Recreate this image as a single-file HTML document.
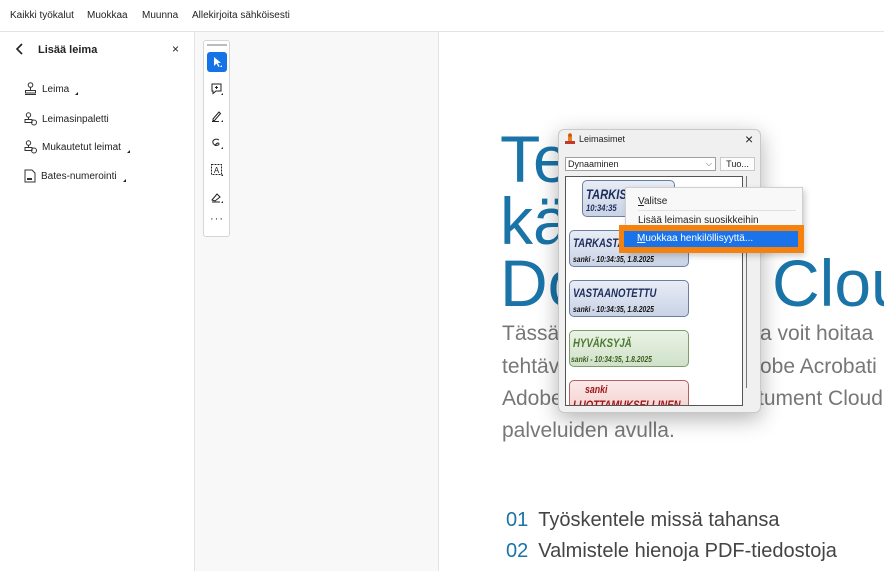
<!DOCTYPE html>
<html><head><meta charset="utf-8">
<style>
*{margin:0;padding:0;box-sizing:border-box}
body{width:884px;height:571px;overflow:hidden;background:#fff;font-family:"Liberation Sans",sans-serif;position:relative;color:#222}
.abs{position:absolute;white-space:nowrap}
#top{left:0;top:0;width:884px;height:32px;border-bottom:1px solid #e3e3e3;font-size:10px}
#top span{position:absolute;top:10px}
#left{left:0;top:32px;width:195px;height:539px;border-right:1px solid #e3e3e3}
#gray{left:195px;top:32px;width:243px;height:539px;background:#f8f8f8}
#page{left:438px;top:32px;width:446px;height:539px;background:#fff;border-left:1px solid #e3e3e3}
.item{position:absolute;left:24px;font-size:10px;display:flex;align-items:center;gap:5px;white-space:nowrap}
.tri{display:inline-block;width:0;height:0;border-left:3px solid transparent;border-bottom:3px solid #222;margin-left:1px;margin-top:8px}
#tb{left:203px;top:40px;width:27px;height:197px;background:#fff;border:1px solid #d6d6d6;border-radius:3px}
.tbi{position:absolute;left:3px;width:20px;height:20px;display:flex;align-items:center;justify-content:center}
.big{font-size:66px;color:#1a74a8;font-family:"Liberation Sans",sans-serif;position:absolute;line-height:1;white-space:nowrap}
.para{font-size:21px;color:#777;position:absolute;font-family:"Liberation Sans",sans-serif;white-space:nowrap}
.li{position:absolute;left:506px;font-size:20px;color:#444;font-family:"Liberation Sans",sans-serif;white-space:nowrap}
.li b{color:#1a74a8;font-weight:normal;margin-right:10px}
#dlg{left:558px;top:129px;width:203px;height:284px;background:#f0f0f0;border:1px solid #c9c9c9;border-radius:6px;box-shadow:0 6px 22px rgba(0,0,0,.3)}
.stamp{position:absolute;border:1px solid #6d7fa0;border-radius:5px;font-family:"Liberation Sans",sans-serif;font-style:italic;font-weight:bold;background:linear-gradient(#e8ecf5,#c9d3e6);color:#1d2e5c;overflow:hidden}
.stamp .t{font-size:12px;position:absolute;left:3px;top:5px;transform:scaleX(.8);transform-origin:left;white-space:nowrap}
.stamp .s{font-size:8px;position:absolute;left:3px;top:24px;color:#111;transform:scaleX(.85);transform-origin:left;white-space:nowrap}
#menu{left:625px;top:187px;width:178px;height:66px;background:#f8f8f8;border:1px solid #cfcfcf;box-shadow:2px 3px 6px rgba(0,0,0,.2);font-size:10px;color:#222}
</style></head><body>
<div id="top" class="abs">
<span style="left:10px">Kaikki työkalut</span><span style="left:87px">Muokkaa</span><span style="left:142px">Muunna</span><span style="left:192px">Allekirjoita sähköisesti</span>
</div>
<div id="left" class="abs">
<svg class="abs" style="left:15px;top:11px" width="10" height="12" viewBox="0 0 10 12"><path d="M7 1L2 6l5 5" stroke="#222" stroke-width="1.6" fill="none"/></svg>
<div class="abs" style="left:38px;top:12px;font-size:11px;font-weight:bold">Lisää leima</div>
<div class="abs" style="left:172px;top:10px;font-size:12px">×</div>
<div class="item" style="top:50px"><svg width="13" height="14" viewBox="0 0 13 14"><circle cx="6.5" cy="3" r="2.3" fill="none" stroke="#333"/><path d="M6.5 5.3v3M1.5 8.5h10v2.5h-10zM1 12.5h11" fill="none" stroke="#333"/></svg>Leima<span class="tri"></span></div>
<div class="item" style="top:80px"><svg width="13" height="14" viewBox="0 0 13 14"><circle cx="4.5" cy="3" r="2.2" fill="none" stroke="#333"/><path d="M4.5 5.2v2M1 7.5h7v3h-7z" fill="none" stroke="#333"/><circle cx="10" cy="10.5" r="2.5" fill="none" stroke="#333"/></svg>Leimasinpaletti</div>
<div class="item" style="top:108px"><svg width="13" height="14" viewBox="0 0 13 14"><circle cx="4.5" cy="3" r="2.2" fill="none" stroke="#333"/><path d="M4.5 5.2v2M1 7.5h7v3h-7z" fill="none" stroke="#333"/><circle cx="10" cy="10.5" r="2.5" fill="none" stroke="#333"/></svg>Mukautetut leimat<span class="tri"></span></div>
<div class="item" style="top:137px"><svg width="12" height="14" viewBox="0 0 12 14"><path d="M1 1h7l3 3v9H1z" fill="none" stroke="#333"/><rect x="3" y="9" width="5" height="2" fill="#333"/></svg>Bates-numerointi<span class="tri"></span></div>
</div>
<div id="gray" class="abs"></div>
<div id="page" class="abs"></div>
<div id="tb" class="abs">
<div class="abs" style="left:3px;top:3px;width:20px;height:2px;background:#bbb"></div>
<div class="tbi" style="top:11px;background:#1473e6;border-radius:3px"><svg width="12" height="14" viewBox="0 0 12 14"><path d="M3 2v9l2.5-2.5 2 3.5 1.2-.7-2-3.4H10z" fill="#fff"/><path d="M11 12l-2 0 2-2z" fill="#fff"/></svg></div>
<div class="tbi" style="top:38px"><svg width="14" height="14" viewBox="0 0 14 14"><path d="M2 2h9v7H6l-3 2.5V9H2z" fill="none" stroke="#222"/><path d="M6.5 4v3M5 5.5h3" stroke="#222"/><path d="M13 13h-2l2-2z" fill="#222"/></svg></div>
<div class="tbi" style="top:65px"><svg width="14" height="14" viewBox="0 0 14 14"><path d="M3 10l6-7 1.5 1.5-6 7H3z" fill="none" stroke="#222"/><path d="M2 12.5h7" stroke="#222"/><path d="M13 13h-2l2-2z" fill="#222"/></svg></div>
<div class="tbi" style="top:92px"><svg width="14" height="14" viewBox="0 0 14 14"><path d="M9 4C6 2 2 4 3 7s6 3 6 1-3-1-4 2" fill="none" stroke="#222"/><path d="M13 13h-2l2-2z" fill="#222"/></svg></div>
<div class="tbi" style="top:119px"><svg width="14" height="14" viewBox="0 0 14 14"><rect x="1.5" y="1.5" width="10" height="10" fill="none" stroke="#222" stroke-dasharray="2 1"/><text x="6.5" y="10" font-size="8" text-anchor="middle" font-family="Liberation Sans" fill="#222">A</text><path d="M13 13h-2l2-2z" fill="#222"/></svg></div>
<div class="tbi" style="top:146px"><svg width="14" height="14" viewBox="0 0 14 14"><path d="M2 10l5-6 3 3-5 4z" fill="none" stroke="#222"/><path d="M2 12h8" stroke="#222"/><path d="M13 13h-2l2-2z" fill="#222"/></svg></div>
<div class="abs" style="left:6px;top:172px;font-size:11px;letter-spacing:1px">···</div>
</div>

<div class="big" style="left:500px;top:126px">Te</div>
<div class="big" style="left:500px;top:188px">kä</div>
<div class="big" style="left:500px;top:250px">Do</div>
<div class="big" style="left:772px;top:250px">Clou</div>
<div class="para" style="left:502px;top:322px">Tässä</div>
<div class="para" style="left:760px;top:322px">a voit hoitaa</div>
<div class="para" style="left:502px;top:355px">tehtäv</div>
<div class="para" style="left:760px;top:355px">obe Acrobati</div>
<div class="para" style="left:502px;top:387px">Adobe</div>
<div class="para" style="left:758px;top:387px">tument Cloud</div>
<div class="para" style="left:502px;top:419px">palveluiden avulla.</div>
<div class="li" style="top:509px"><b>01</b>Työskentele missä tahansa</div>
<div class="li" style="top:540px"><b>02</b>Valmistele hienoja PDF-tiedostoja</div>

<div id="dlg" class="abs">
<svg class="abs" style="left:5px;top:3px" width="12" height="12" viewBox="0 0 12 12"><rect x="1" y="8" width="10" height="3" fill="#c0392b"/><rect x="4" y="2" width="4" height="6" fill="#e67e22"/><circle cx="6" cy="2" r="1.8" fill="#d35400"/></svg>
<div class="abs" style="left:20px;top:4px;font-size:9px">Leimasimet</div>
<div class="abs" style="left:186px;top:1px;font-size:14px">×</div>
<div class="abs" style="left:6px;top:27px;width:151px;height:14px;background:#fff;border:1px solid #a0a0a0;font-size:9px;padding-left:2px;line-height:12px">Dynaaminen<span style="position:absolute;right:3px;top:0;font-size:8px;color:#555">⌵</span></div>
<div class="abs" style="left:161px;top:27px;width:35px;height:14px;background:#fdfdfd;border:1px solid #c8c8c8;font-size:9px;text-align:center;line-height:12px">Tuo...</div>
<div class="abs" style="left:6px;top:46px;width:178px;height:230px;background:#fff;border:1px solid #555;overflow:hidden">
 <div class="stamp" style="left:16px;top:3px;width:93px;height:37px"><div class="t" style="font-size:14px">TARKISTETTU</div><div class="s" style="font-size:9px;color:#1d2e5c;top:22px">10:34:35</div></div>
 <div class="stamp" style="left:3px;top:53px;width:120px;height:37px"><div class="t">TARKASTAJA</div><div class="s">sanki - 10:34:35, 1.8.2025</div></div>
 <div class="stamp" style="left:3px;top:103px;width:120px;height:37px"><div class="t">VASTAANOTETTU</div><div class="s">sanki - 10:34:35, 1.8.2025</div></div>
 <div class="stamp" style="left:3px;top:153px;width:120px;height:37px;border-color:#7d9d6d;background:linear-gradient(#eaf3e6,#cfe1c8);color:#4c7a2d"><div class="t">HYVÄKSYJÄ</div><div class="s" style="color:#3b5d1e;left:1px">sanki - 10:34:35, 1.8.2025</div></div>
 <div class="stamp" style="left:3px;top:203px;width:120px;height:37px;border-color:#b26060;background:linear-gradient(#fbe9e9,#f3cccc);color:#a01818"><div class="t" style="left:15px;top:3px;font-size:11px">sanki</div><div class="t" style="top:17px">LUOTTAMUKSELLINEN</div></div>
</div>
<div class="abs" style="left:187px;top:46px;width:1px;height:212px;background:#777"></div>
</div>

<div id="menu" class="abs">
<div class="abs" style="left:12px;top:8px"><u>V</u>alitse</div>
<div class="abs" style="left:12px;top:22px;width:158px;height:1px;background:#e0e0e0"></div>
<div class="abs" style="left:12px;top:27px">Lisää leimasin suosikkeihin</div>
</div>
<div class="abs" style="left:619px;top:225px;width:185px;height:28px;background:#f5820f"></div>
<div class="abs" style="left:624px;top:231px;width:174px;height:16px;background:#1a73e8;color:#fff;font-size:10px;padding-left:13px;line-height:15px"><u>M</u>uokkaa henkilöllisyyttä...</div>
</body></html>
